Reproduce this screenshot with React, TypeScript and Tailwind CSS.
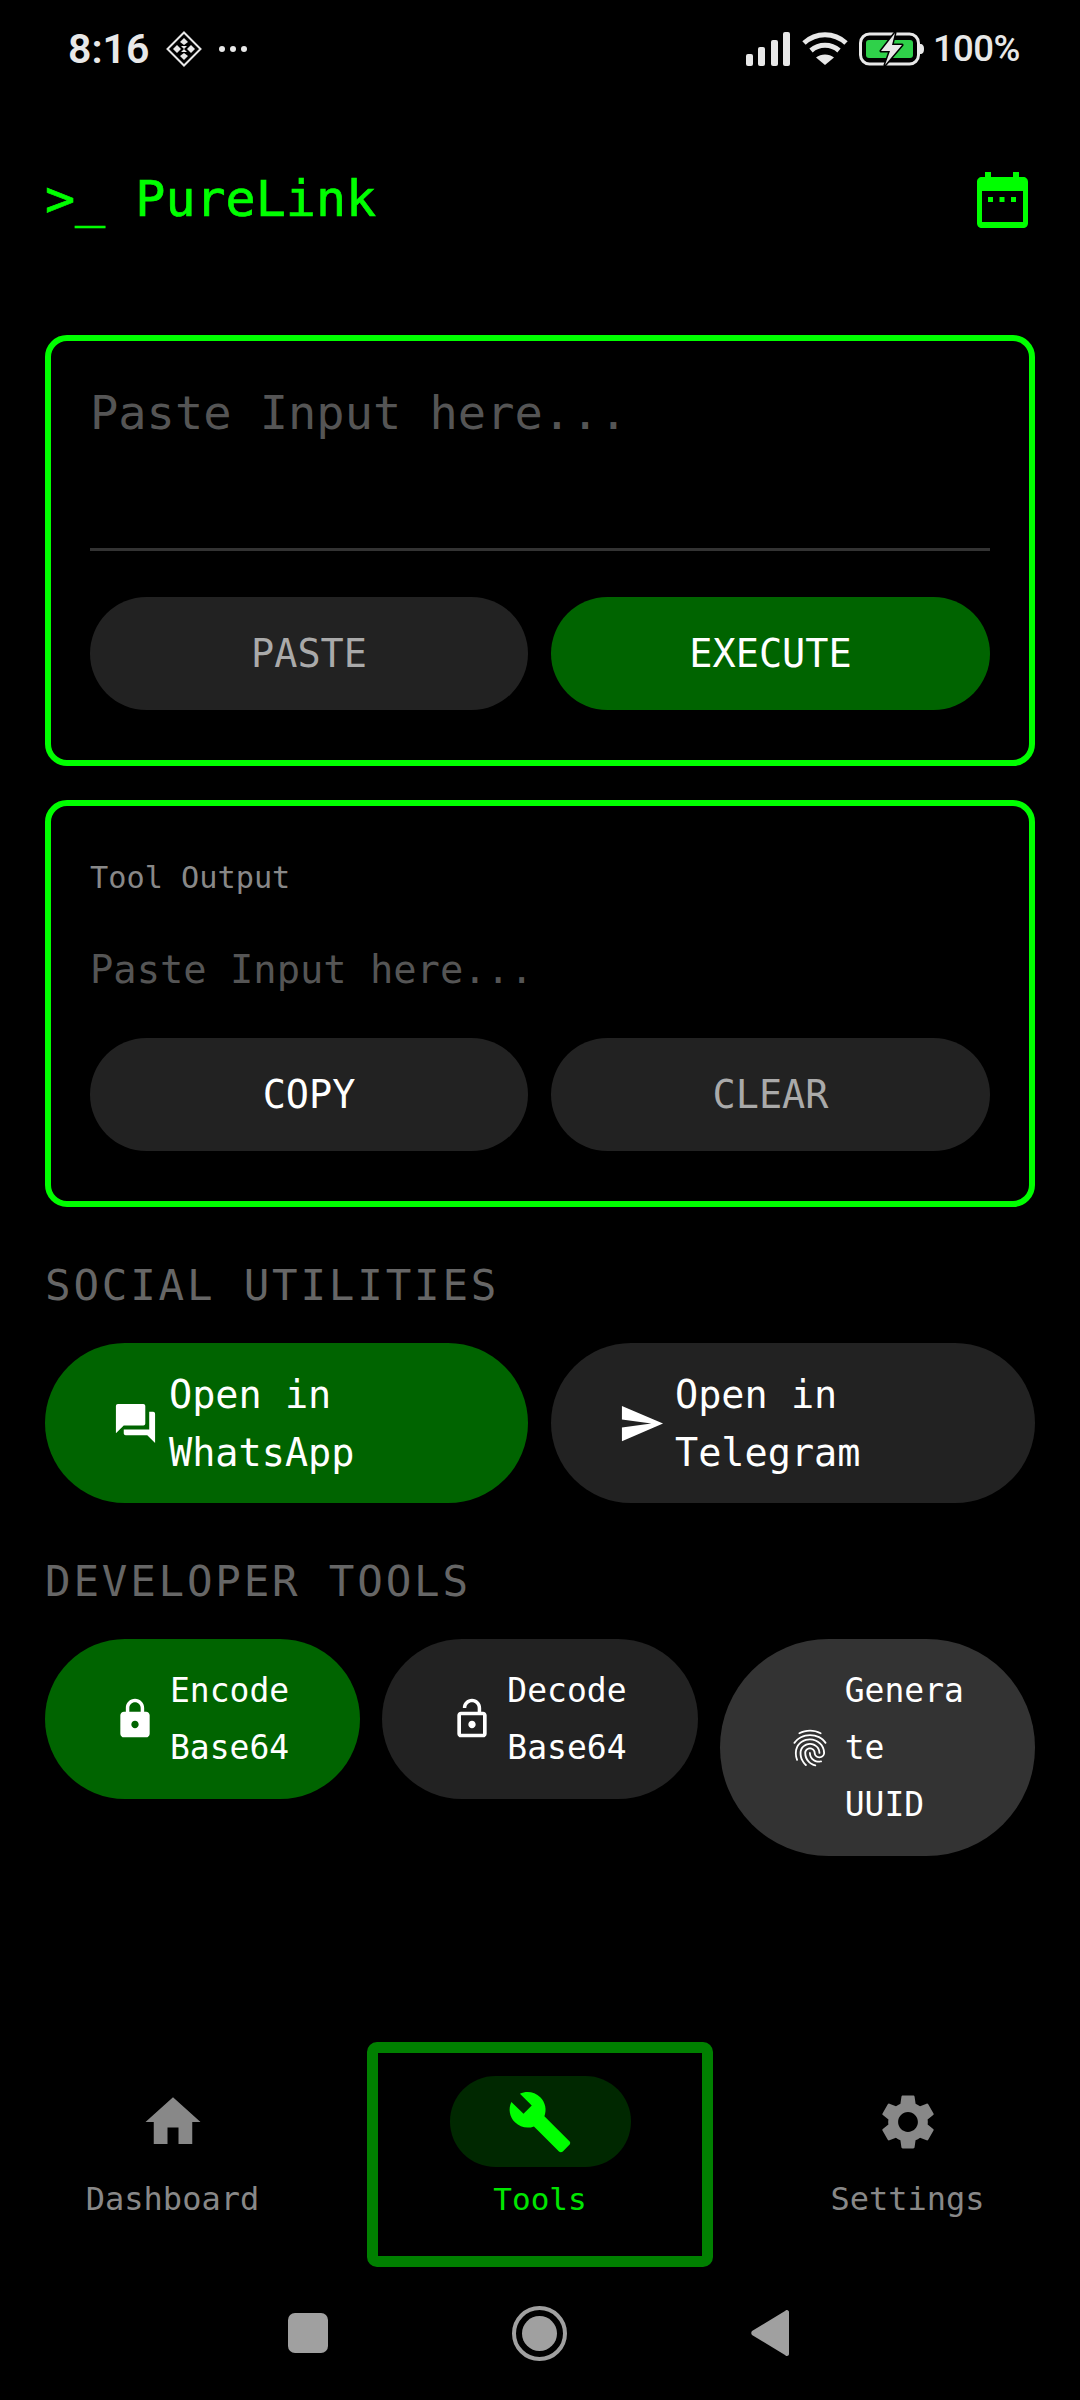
import type { ReactNode } from 'react';

const paths = {
  home: 'M10 20v-6h4v6h5v-8h3L12 3 2 12h3v8z',
  settings:
    'M19.14 12.94c.04-.3.06-.61.06-.94 0-.32-.02-.64-.07-.94l2.03-1.58c.18-.14.23-.41.12-.61l-1.92-3.32c-.12-.22-.37-.29-.59-.22l-2.39.96c-.5-.38-1.03-.7-1.62-.94l-.36-2.54c-.04-.24-.24-.41-.48-.41h-3.84c-.24 0-.43.17-.47.41l-.36 2.54c-.59.24-1.13.57-1.62.94l-2.39-.96c-.22-.08-.47 0-.59.22L2.74 8.87c-.12.21-.08.47.12.61l2.03 1.58c-.05.3-.09.63-.09.94s.02.64.07.94l-2.03 1.58c-.18.14-.23.41-.12.61l1.92 3.32c.12.22.37.29.59.22l2.39-.96c.5.38 1.03.7 1.62.94l.36 2.54c.05.24.24.41.48.41h3.84c.24 0 .44-.17.47-.41l.36-2.54c.59-.24 1.13-.56 1.62-.94l2.39.96c.22.08.47 0 .59-.22l1.92-3.32c.12-.22.07-.47-.12-.61l-2.01-1.58zM12 15.6c-1.98 0-3.6-1.62-3.6-3.6s1.62-3.6 3.6-3.6 3.6 1.62 3.6 3.6-1.62 3.6-3.6 3.6z',
  build:
    'M22.7 19l-9.1-9.1c.9-2.3.4-5-1.5-6.9-2-2-5-2.4-7.4-1.3L9 6 6 9 1.6 4.7C.4 7.1.9 10.1 2.9 12.1c1.9 1.9 4.6 2.4 6.9 1.5l9.1 9.1c.4.4 1 .4 1.4 0l2.3-2.3c.5-.4.5-1.1.1-1.4z',
  forum:
    'M21 6h-2v9H6v2c0 .55.45 1 1 1h11l4 4V7c0-.55-.45-1-1-1zm-4 6V3c0-.55-.45-1-1-1H3c-.55 0-1 .45-1 1v14l4-4h10c.55 0 1-.45 1-1z',
  send: 'M2.01 21L23 12 2.01 3 2 10l15 2-15 2z',
  lock: 'M18 8h-1V6c0-2.76-2.24-5-5-5S7 3.24 7 6v2H6c-1.1 0-2 .9-2 2v10c0 1.1.9 2 2 2h12c1.1 0 2-.9 2-2V10c0-1.1-.9-2-2-2zm-6 9c-1.1 0-2-.9-2-2s.9-2 2-2 2 .9 2 2-.9 2-2 2zm3.1-9H8.9V6c0-1.71 1.39-3.1 3.1-3.1 1.71 0 3.1 1.39 3.1 3.1v2z',
  lockOpen:
    'M12 17c1.1 0 2-.9 2-2s-.9-2-2-2-2 .9-2 2 .9 2 2 2zm6-9h-1V6c0-2.76-2.24-5-5-5S7 3.24 7 6h1.9c0-1.71 1.39-3.1 3.1-3.1 1.71 0 3.1 1.39 3.1 3.1v2H6c-1.1 0-2 .9-2 2v10c0 1.1.9 2 2 2h12c1.1 0 2-.9 2-2V10c0-1.1-.9-2-2-2zm0 12H6V10h12v10z',
  fingerprint:
    'M17.81 4.47c-.08 0-.16-.02-.23-.06C15.66 3.42 14 3 12.01 3c-1.98 0-3.86.47-5.57 1.41-.24.13-.54.04-.68-.2-.13-.24-.04-.55.2-.68C7.82 2.52 9.86 2 12.01 2c2.13 0 3.99.47 6.03 1.52.25.13.34.43.21.67-.09.18-.26.28-.44.28zM3.5 9.72c-.1 0-.2-.03-.29-.09-.23-.16-.28-.47-.12-.7.99-1.4 2.25-2.5 3.75-3.27C9.98 4.04 14 4.03 17.15 5.65c1.5.77 2.76 1.86 3.75 3.25.16.22.11.54-.12.7-.23.16-.54.11-.7-.12-.9-1.26-2.04-2.25-3.39-2.94-2.87-1.47-6.54-1.47-9.4.01-1.36.7-2.5 1.7-3.4 2.96-.08.14-.23.21-.39.21zm6.25 12.07c-.13 0-.26-.05-.35-.15-.87-.87-1.34-1.43-2.01-2.64-.69-1.23-1.05-2.73-1.05-4.34 0-2.97 2.54-5.39 5.66-5.39s5.66 2.42 5.66 5.39c0 .28-.22.5-.5.5s-.5-.22-.5-.5c0-2.42-2.09-4.39-4.66-4.39-2.57 0-4.66 1.97-4.66 4.39 0 1.44.32 2.77.93 3.85.64 1.15 1.08 1.64 1.85 2.42.19.2.19.51 0 .71-.11.1-.24.15-.37.15zm7.17-1.85c-1.19 0-2.24-.3-3.1-.89-1.49-1.01-2.38-2.65-2.38-4.39 0-.28.22-.5.5-.5s.5.22.5.5c0 1.41.72 2.74 1.94 3.56.71.48 1.54.71 2.54.71.24 0 .64-.03 1.04-.1.27-.05.53.13.58.41.05.27-.13.53-.41.58-.57.11-1.07.12-1.21.12zM14.91 22c-.04 0-.09-.01-.13-.02-1.59-.44-2.63-1.03-3.72-2.1-1.4-1.39-2.17-3.24-2.17-5.22 0-1.62 1.38-2.94 3.08-2.94 1.7 0 3.08 1.32 3.08 2.94 0 1.07.93 1.94 2.08 1.94s2.08-.87 2.08-1.94c0-3.77-3.25-6.83-7.25-6.83-2.84 0-5.44 1.58-6.61 4.03-.39.81-.59 1.76-.59 2.8 0 .78.07 2.01.67 3.61.1.26-.03.55-.29.64-.26.1-.55-.04-.64-.29-.49-1.31-.73-2.61-.73-3.96 0-1.2.23-2.29.68-3.24 1.33-2.79 4.28-4.6 7.51-4.6 4.55 0 8.25 3.51 8.25 7.83 0 1.62-1.38 2.94-3.08 2.94s-3.08-1.32-3.08-2.94c0-1.07-.93-1.94-2.08-1.94s-2.08.87-2.08 1.94c0 1.71.66 3.31 1.87 4.51.95.94 1.86 1.46 3.27 1.85.27.07.42.35.35.61-.05.23-.26.38-.47.38z',
};

function Icon({ d, className }: { d: string; className: string }) {
  return (
    <svg viewBox="0 0 24 24" fill="currentColor" className={className}>
      <path d={d} />
    </svg>
  );
}

function StatusBar() {
  return (
    <div className="flex h-[98px] items-center justify-between pl-[68px] pr-[60px] text-[#e8e8e8] font-['Roboto',sans-serif]">
      <div className="flex items-center">
        <span className="text-[41px] font-semibold leading-none">8:16</span>
        <svg viewBox="0 0 36 36" className="ml-[17px] h-[36px] w-[36px]">
          <path d="M18 1.5 34.5 18 18 34.5 1.5 18z" fill="none" stroke="currentColor" strokeWidth="2" />
          <path d="M18 7l4 4-4 3-4-3zM11 14l4 4-4 4-4-4zM25 14l4 4-4 4-4-4zM18 22l4 3-4 4-4-4zM15 15h6l-3 3zM15 21h6l-3-3z" fill="currentColor" />
        </svg>
        <div className="ml-[17px] flex gap-[5px]">
          <span className="h-[6px] w-[6px] rounded-full bg-[#e8e8e8]" />
          <span className="h-[6px] w-[6px] rounded-full bg-[#e8e8e8]" />
          <span className="h-[6px] w-[6px] rounded-full bg-[#e8e8e8]" />
        </div>
      </div>
      <div className="flex items-center">
        <svg viewBox="0 0 44 34" className="h-[34px] w-[44px]" fill="currentColor">
          <rect x="0" y="22" width="7" height="12" rx="2" />
          <rect x="12" y="15" width="7" height="19" rx="2" />
          <rect x="25" y="8" width="7" height="26" rx="2" />
          <rect x="37" y="0" width="7" height="34" rx="2" />
        </svg>
        <svg viewBox="0 0 46 34" className="ml-[12px] h-[34px] w-[46px]" fill="none" stroke="currentColor" strokeWidth="5">
          <path d="M2 11C14 0 32 0 44 11" />
          <path d="M9 18.500C17 11.500 29 11.500 37 18.500" />
          <path d="M23 33 14 25.500C19 21.500 27 21.500 32 25.500z" fill="currentColor" stroke="none" />
        </svg>
        <svg viewBox="0 0 65 34" className="ml-[11px] h-[34px] w-[65px]">
          <rect x="1.500" y="2" width="58" height="30" rx="9" fill="none" stroke="currentColor" strokeWidth="3" />
          <rect x="7" y="8" width="47" height="18" rx="3" fill="#2fd14a" />
          <path d="M61 12c3 0 4 2 4 5s-1 5-4 5z" fill="currentColor" />
          <path d="M36 1 22 19h9l-5 14 17-20H33z" fill="currentColor" stroke="#000" strokeWidth="3" strokeLinejoin="round" paintOrder="stroke" />
        </svg>
        <span className="ml-[9px] text-[36.500px] font-medium leading-none tracking-[-0.5px]">100%</span>
      </div>
    </div>
  );
}

function Header() {
  return (
    <header className="mt-[62px] mb-[99px] flex h-[76px] items-center justify-between pl-[45px] pr-[52px]">
      <h1 className="mt-[2px] text-[50px] leading-none text-[#00ff00] [-webkit-text-stroke:0.7px_#00ff00]">{'>_ PureLink'}</h1>
      <svg viewBox="0 0 51 56" className="mt-[4px] h-[56px] w-[51px]" fill="#00ff00">
        <path d="M8 0h6v5h22V0h6v5h4c3 0 5 2 5 5v41c0 3-2 5-5 5H5c-3 0-5-2-5-5V10c0-3 2-5 5-5h3zM5 19v31h41V19z" fillRule="evenodd" />
        <rect x="11" y="25" width="5" height="5" />
        <rect x="22.500" y="25" width="5" height="5" />
        <rect x="34" y="25" width="5" height="5" />
      </svg>
    </header>
  );
}

function ActionButton({ label, className }: { label: string; className: string }) {
  return (
    <button className={`flex h-[113px] items-center justify-center rounded-full pt-[2px] text-[38.500px] leading-none ${className}`}>
      {label}
    </button>
  );
}

function Pill({ icon, children, className }: { icon: string; children: ReactNode; className: string }) {
  return (
    <button className={`flex h-[160px] items-center rounded-full pl-[67px] pr-[70px] text-left text-[38.500px] leading-[58px] text-white ${className}`}>
      <Icon d={icon} className="h-[47px] w-[47px] shrink-0" />
      <span className="ml-[10px] mt-[2px] min-w-0">{children}</span>
    </button>
  );
}

function ToolPill({ icon, children, className }: { icon: string; children: ReactNode; className: string }) {
  return (
    <button className={`flex min-w-0 items-center rounded-full py-[23px] pl-[68px] pr-[67px] text-left text-[33px] leading-[57px] text-white ${className}`}>
      <Icon d={icon} className="h-[44px] w-[44px] shrink-0" />
      <span className="ml-[13px] min-w-0 break-words">{children}</span>
    </button>
  );
}

function NavItem({ icon, label }: { icon: string; label: string }) {
  return (
    <div className="flex h-[225px] w-[345px] flex-none flex-col items-center pt-[34px] text-[#888888]">
      <div className="flex h-[91px] w-[181px] items-center justify-center">
        <Icon d={icon} className="h-[66px] w-[66px]" />
      </div>
      <span className="mt-[12px] text-[32px] leading-[40px]">{label}</span>
    </div>
  );
}

export default function App() {
  return (
    <div className="flex h-[2400px] w-[1080px] flex-col overflow-hidden bg-black font-['DejaVu_Sans_Mono',monospace]">
      <StatusBar />
      <Header />

      <main className="flex flex-col px-[45px]">
        {/* Input card */}
        <section className="flex h-[431px] flex-col rounded-[22px] border-[6px] border-[#00ff00] px-[39px]">
          <div className="h-[210px] border-b-[3px] border-[#333333] pt-[40px] text-[47px] leading-[64px] text-[#555555]">
            Paste Input here...
          </div>
          <div className="mt-[46px] flex gap-[23px]">
            <ActionButton label="PASTE" className="w-[438px] bg-[#222222] text-[#aaaaaa]" />
            <ActionButton label="EXECUTE" className="flex-1 bg-[#006400] text-white" />
          </div>
        </section>

        {/* Output card */}
        <section className="mt-[34px] flex h-[407px] flex-col rounded-[22px] border-[6px] border-[#00ff00] px-[39px]">
          <div className="mt-[52px] text-[30.250px] leading-[40px] text-[#888888]">Tool Output</div>
          <div className="mt-[48px] text-[38.750px] leading-[48px] text-[#555555]">Paste Input here...</div>
          <div className="mt-[44px] flex gap-[23px]">
            <ActionButton label="COPY" className="w-[438px] bg-[#222222] text-white" />
            <ActionButton label="CLEAR" className="flex-1 bg-[#222222] text-[#aaaaaa]" />
          </div>
        </section>

        <h2 className="mt-[53px] text-[42.500px] leading-[52px] tracking-[2.800px] text-[#666666]">SOCIAL UTILITIES</h2>
        <div className="mt-[31px] flex gap-[23px]">
          <Pill icon={paths.forum} className="w-[483px] bg-[#006400]">Open in WhatsApp</Pill>
          <Pill icon={paths.send} className="flex-1 bg-[#222222]">Open in Telegram</Pill>
        </div>

        <h2 className="mt-[53px] text-[42.500px] leading-[52px] tracking-[2.800px] text-[#666666]">DEVELOPER TOOLS</h2>
        <div className="mt-[31px] grid grid-cols-3 items-start gap-[22px]">
          <ToolPill icon={paths.lock} className="bg-[#006400]">Encode Base64</ToolPill>
          <ToolPill icon={paths.lockOpen} className="bg-[#222222]">Decode Base64</ToolPill>
          <ToolPill icon={paths.fingerprint} className="bg-[#333333]">Generate UUID</ToolPill>
        </div>
      </main>

      {/* Bottom nav */}
      <nav className="mt-auto flex gap-[22px]">
        <NavItem icon={paths.home} label="Dashboard" />
        <div className="flex h-[225px] w-[346px] flex-none flex-col items-center rounded-[10px] border-[11px] border-[#008000] pt-[23px]">
          <div className="flex h-[91px] w-[181px] items-center justify-center rounded-full bg-[#002800] text-[#00ff00]">
            <Icon d={paths.build} className="h-[66px] w-[66px]" />
          </div>
          <span className="mt-[12px] text-[31px] leading-[40px] text-[#00e600]">Tools</span>
        </div>
        <NavItem icon={paths.settings} label="Settings" />
      </nav>

      {/* System nav */}
      <div className="mt-[25px] mb-[26px] flex h-[82px] items-center justify-center gap-[184px] pr-[4px]">
        <span className="h-[40px] w-[40px] rounded-[7px] bg-[#a0a0a0]" />
        <span className="flex h-[55px] w-[55px] items-center justify-center rounded-full border-[4px] border-[#a0a0a0]">
          <span className="h-[35px] w-[35px] rounded-full bg-[#a0a0a0]" />
        </span>
        <svg viewBox="0 0 38 48" className="h-[48px] w-[38px]" fill="#a0a0a0">
          <path d="M36 1c1 0 2 1 2 2v42c0 1-1 2-2 2-1 0-1 0-2-1L1 26c-1-1-1-3 0-4L34 2c1-1 1-1 2-1z" />
        </svg>
      </div>
    </div>
  );
}
